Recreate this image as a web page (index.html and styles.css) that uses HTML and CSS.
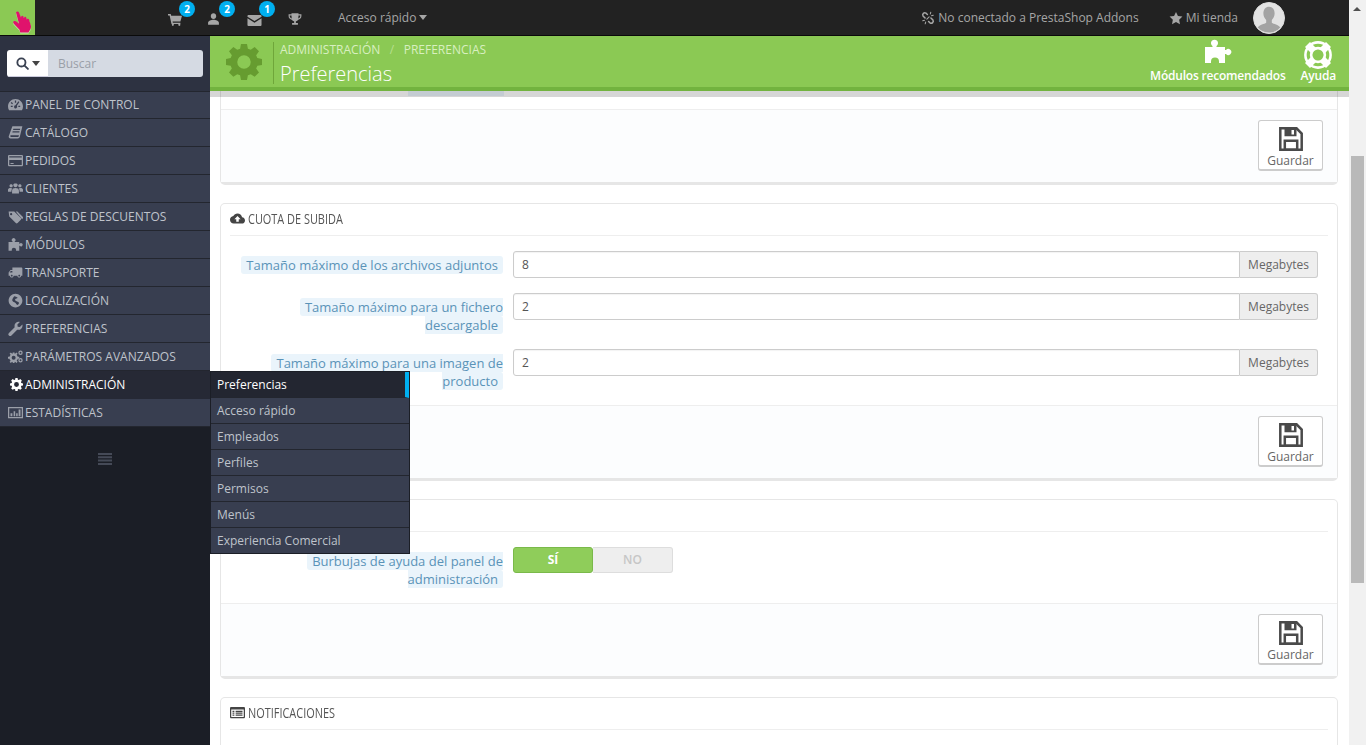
FILE: index.html
```html
<!DOCTYPE html>
<html lang="es">
<head>
<meta charset="utf-8">
<title>Preferencias</title>
<link rel="stylesheet" href="styles.css">
</head>
<body>
<svg class="sprite" width="0" height="0" aria-hidden="true">
  <symbol id="i-cart" viewBox="0 0 26 22"><path d="M0 0h5l1 3h20l-3 11H8.500l.5 2h14v2.500H6.500L3 2.500H0z"/><circle cx="9" cy="20" r="2"/><circle cx="21" cy="20" r="2"/></symbol>
  <symbol id="i-user" viewBox="0 0 24 24"><path d="M12 12c2.900 0 5-2.300 5-5.200S14.900 1.500 12 1.500 7 3.900 7 6.800 9.100 12 12 12zm0 1.500c-4 0-10 1.700-10 5.500v3.500h20V19c0-3.800-6-5.500-10-5.500z"/></symbol>
  <symbol id="i-mail" viewBox="0 3 24 18"><path d="M2 3h20c.9 0 1.500.6 1.500 1.500v1.300L12 13 .5 5.800V4.500C.5 3.600 1.100 3 2 3zM.5 8.300V19.500c0 .9.6 1.500 1.500 1.500h20c.9 0 1.500-.6 1.500-1.500V8.300L12 15.500z"/></symbol>
  <symbol id="i-trophy" viewBox="0 0 24 24"><path d="M6 2h12v2h5v3c0 3.500-2.500 6-6 6.500-.8 1.300-2 2-3.500 2.400V19H17v3H7v-3h3.500v-3.100C9 15.500 7.800 14.800 7 13.500 3.500 13 1 10.500 1 7V4h5zM3 6v1c0 2 1.200 3.600 3.500 4.200C6.200 10 6 8 6 6zm18 0h-3c0 2-.2 4-.5 5.200C19.800 10.600 21 9 21 7z"/></symbol>
  <symbol id="i-star" viewBox="0 0 24 24"><path d="M12 1.500l3.300 7 7.700 1-5.600 5.300 1.400 7.700-6.800-3.700-6.800 3.700 1.400-7.700L1 9.500l7.700-1z"/></symbol>
  <symbol id="i-unlink" viewBox="0 0 24 24"><g fill="none" stroke="currentColor" stroke-width="2.600" stroke-linecap="round"><path d="M11 6L8.500 3.800a3.500 3.500 0 0 0-5 4.700L7 12"/><path d="M13 18l2.500 2.200a3.500 3.500 0 0 0 5-4.700L17 12"/><path d="M6 16l-3 .8M8 19l-.8 3M18 8l3-.8M16 5l.8-3M10 14l4-4" stroke-width="1.800"/></g></symbol>
  <symbol id="i-gear" viewBox="0 0 24 24"><path fill-rule="evenodd" d="M10 1h4l.6 3.100 1.900.8L19.100 3 22 5.900l-1.900 2.600.8 1.900L24 11v4l-3.100.5-.8 1.900L22 20l-2.900 2.900-2.600-1.800-1.900.8L14 25h-4l-.6-3.100-1.900-.8L4.900 22.900 2 20l1.900-2.600-.8-1.900L0 15v-4l3.100-.6.8-1.900L2 5.900 4.900 3l2.600 1.900 1.900-.8zM12 8.500a4.500 4.500 0 1 0 0 9 4.500 4.500 0 0 0 0-9z" transform="translate(0 -1)"/></symbol>
  <symbol id="i-puzzle" viewBox="0 0 28 25"><path d="M1 8h7.500V7a3.500 3.500 0 1 1 4 0v1H21v3h1a3 3 0 1 1 0 4h-1v9h-6v-1.500a4 4 0 0 0-8 0V24H1z"/></symbol>
  <symbol id="i-buoy" viewBox="0 0 24 24"><circle cx="12" cy="12" r="10.800" fill="none" stroke="currentColor" stroke-width="2.200"/><circle cx="12" cy="12" r="5.800" fill="none" stroke="currentColor" stroke-width="2.400"/><path d="M12 12L3 3" stroke="currentColor" stroke-width="6"/><path d="M12 12L21 3" stroke="currentColor" stroke-width="6"/><path d="M12 12L3 21" stroke="currentColor" stroke-width="6"/><path d="M12 12L21 21" stroke="currentColor" stroke-width="6"/><circle class="buoy-hole" cx="12" cy="12" r="4.700"/></symbol>
  <symbol id="i-search" viewBox="0 0 24 24"><g fill="none" stroke="currentColor" stroke-width="3.400" stroke-linecap="round"><circle cx="10" cy="10" r="7.500"/><path d="M15.800 15.800L22 22"/></g></symbol>
  <symbol id="i-gauge" viewBox="0 0 24 24"><path fill-rule="evenodd" d="M12 3C5.400 3 0 8.400 0 15c0 2.200.6 4.300 1.700 6h20.600c1.100-1.700 1.700-3.800 1.700-6 0-6.600-5.400-12-12-12zM11 5.500h2V9h-2zM4.500 14h3v2h-3zm12 0h3v2h-3zM5.500 8l2.500 2-1.300 1.400-2.400-2zm11.200-1.200l1.500 1.300-4 6a2.500 2.500 0 1 1-2.200-1z"/></symbol>
  <symbol id="i-book" viewBox="0 0 24 24"><path d="M7 2h16l-4 16.500c-.3 1.400-1.300 3-3.500 3H4c-2 0-3.300-1.500-2.800-3.500zM8.500 6l-.4 1.800h11L19.500 6zM7.400 10l-.4 1.800h11l.4-1.800zM4.800 16.500c-.8 0-1.300.5-1.300 1.200s.5 1.300 1.300 1.300h11c.8 0 1.200-.5 1.400-1.200l.3-1.300z"/></symbol>
  <symbol id="i-card" viewBox="0 0 24 24"><path fill-rule="evenodd" d="M2 3h20c1.100 0 2 .9 2 2v14c0 1.100-.9 2-2 2H2c-1.100 0-2-.9-2-2V5c0-1.100.9-2 2-2zm0 2v2h20V5zm0 6v8h20v-8zm2 5h5v1.500H4z"/></symbol>
  <symbol id="i-group" viewBox="0 4 24 16"><path d="M12 10c2 0 3.500-1.600 3.500-3.500S14 4 12 4 8.500 4.600 8.500 6.500 10 10 12 10zM5 10c1.500 0 2.600-1.100 2.600-2.600S6.500 5 5 5 2.400 5.900 2.400 7.400 3.500 10 5 10zm14 0c1.500 0 2.600-1.100 2.600-2.600S20.500 5 19 5s-2.600.9-2.600 2.400S17.500 10 19 10zM7 12c-1-.8-2-1-3-1-2 0-4 .8-4 3v3h5.500v-1.500C5.500 14 6 13 7 12zm10 0c1 1 1.500 2 1.500 3.500V17H24v-3c0-2.200-2-3-4-3-1 0-2 .2-3 1zM6.500 20h11v-4.500c0-3-2.500-4.200-5.500-4.200s-5.500 1.200-5.500 4.200z"/></symbol>
  <symbol id="i-tag" viewBox="0 0 24 24"><path d="M1 4h9l10.500 10.500c.8.8.8 2 0 2.800l-5.200 5.200c-.8.8-2 .8-2.800 0L2 12zm4 2.500a1.800 1.800 0 1 0 0 3.600 1.800 1.800 0 0 0 0-3.600z"/><path d="M12.500 4h2.500l8.500 8.500c.8.8.8 2 0 2.800l-1 1z"/></symbol>
  <symbol id="i-truck" viewBox="0 0 24 24"><path transform="matrix(-1 0 0 1 24 0)" d="M20 8h-3V4H3c-1.100 0-2 .9-2 2v11h2c0 1.660 1.340 3 3 3s3-1.340 3-3h6c0 1.660 1.340 3 3 3s3-1.340 3-3h2v-5l-3-4zM6 18.500c-.83 0-1.500-.67-1.500-1.500s.67-1.500 1.500-1.500 1.500.67 1.500 1.500-.67 1.500-1.500 1.500zm13.500-9l1.960 2.500H17V9.500h2.500zm-1.500 9c-.83 0-1.500-.67-1.500-1.500s.67-1.500 1.500-1.500 1.500.67 1.500 1.500-.67 1.500-1.500 1.500z"/></symbol>
  <symbol id="i-globe" viewBox="0 0 24 24"><path d="M12 1C5.900 1 1 5.900 1 12s4.900 11 11 11 11-4.900 11-11S18.100 1 12 1zm-2 4c2 .5 4 1 5.500 2.500-1 1.500-3 1-4 2.500s1 3 3 3.500c1.500.3 3 .8 3 2.500 0 1-.8 2.500-2 3-2.500-.5-2.500-2.500-4-3.500s-3.500-1-4.500-3C6 10.500 8 8 10 5z"/></symbol>
  <symbol id="i-wrench" viewBox="0 0 24 24"><path d="M23 5.500c.6 2.500 0 5-1.800 6.700-1.800 1.800-4.300 2.300-6.500 1.600L5.500 23a2.800 2.800 0 0 1-4-4l9.200-9.200c-.7-2.200-.2-4.700 1.600-6.500C14 1.500 16.500.9 19 1.500L15 5.500l.5 3.500 3.500.5z"/></symbol>
  <symbol id="i-cogs" viewBox="0 0 24 24"><circle cx="9" cy="14" r="5" fill="none" stroke="currentColor" stroke-width="3.600"/><path d="M7.500 5.500h3v4h-3zM7.500 18.500h3v4h-3zM0 12.500h4v3H0zM14 12.500h4v3h-4zM2.500 7.500l2-2 3 3-2 2zM13.500 5.500l2 2-3 3-2-2zM2.500 20.500l2 2 3-3-2-2zM15.500 20.500l-2 2-3-3 2-2z"/><circle cx="20" cy="6" r="2.500" fill="none" stroke="currentColor" stroke-width="2"/><circle cx="20" cy="18" r="2.500" fill="none" stroke="currentColor" stroke-width="2"/></symbol>
  <symbol id="i-chart" viewBox="0 0 24 24"><path fill-rule="evenodd" d="M0 3h24v18H0zm2 2v14h20V5z"/><path d="M4 13h3v5H4zM9 10h2.500v8H9zM13 13h2.500v5H13zM17 7h3v11h-3z"/></symbol>
  <symbol id="i-bars" viewBox="0 0 14 12"><path d="M0 0h14v2H0zM0 3.300h14v2H0zM0 6.600h14v2H0zM0 10h14v2H0z"/></symbol>
  <symbol id="i-cloud" viewBox="0 0 24 24"><path d="M19.350 10.040C18.670 6.590 15.640 4 12 4 9.110 4 6.600 5.640 5.350 8.040 2.340 8.360 0 10.910 0 14c0 3.310 2.690 6 6 6h13c2.760 0 5-2.240 5-5 0-2.640-2.050-4.780-4.650-4.960zM14 13v4h-4v-4H7l5-5 5 5h-3z"/></symbol>
  <symbol id="i-list" viewBox="0 0 24 24"><path fill-rule="evenodd" d="M2 3h20c1.100 0 2 .9 2 2v14c0 1.100-.9 2-2 2H2c-1.100 0-2-.9-2-2V5c0-1.100.9-2 2-2zm0 4v12h20V7zm2 2h3v2H4zm5 0h11v2H9zM4 12h3v2H4zm5 0h11v2H9zM4 15h3v2H4zm5 0h11v2H9z"/></symbol>
  <symbol id="i-save" viewBox="0 0 24 24"><path d="M1.300 1.300H17.500l5.200 5.200v16.200H1.300z" fill="none" stroke="currentColor" stroke-width="2.500"/><path fill-rule="evenodd" d="M5.500 1.300h12v8h-12zM12.500 3v4.500h2.500V3z"/><path d="M5.800 13.800h12.400v8.900H5.800z" fill="none" stroke="currentColor" stroke-width="2.500"/></symbol>
  <symbol id="i-hand" viewBox="0 0 19 22"><path d="M3 1.500C3.600.3 5.300.1 5.900 1.300L8 6.500l.4-1.200c.3-.9 1.800-.8 2 .3l.5 1.700.5-1c.4-.8 1.700-.6 1.900.4l.5 1.800.5-.6c.5-.5 1.400-.2 1.700.6L18 15c.2 1.800-.5 3.600-1.800 5l-.6 1.500H7.200L6.500 18.800 .8 12.700c-.8-.9-.8-2 0-2.500.8-.5 1.800-.2 2.500.4L6 12.800z"/></symbol>
</svg>

<div class="app">
  <div class="page">
    <header class="topbar">
      <a class="logo"><svg class="hand"><use href="#i-hand"/></svg></a>
      <nav class="notifs">
        <span class="notif n-cart"><svg class="ico"><use href="#i-cart"/></svg><b class="badge">2</b></span>
        <span class="notif n-user"><svg class="ico"><use href="#i-user"/></svg><b class="badge">2</b></span>
        <span class="notif n-mail"><svg class="ico"><use href="#i-mail"/></svg><b class="badge">1</b></span>
        <span class="notif n-trophy"><svg class="ico"><use href="#i-trophy"/></svg></span>
      </nav>
      <span class="quick">Acceso rápido<i class="caret"></i></span>
      <div class="top-right">
        <span class="top-link addons"><svg class="ico"><use href="#i-unlink"/></svg>No conectado a PrestaShop Addons</span>
        <span class="top-link shop"><svg class="ico"><use href="#i-star"/></svg>Mi tienda</span>
        <span class="avatar"><svg viewBox="0 0 32 32"><path d="M16 4c3.500 0 6 2.800 6 7 0 3-1.200 5.500-3 7v3c2 1.500 7 2 9 5a16 16 0 0 1-24 0c2-3 7-3.500 9-5v-3c-1.800-1.500-3-4-3-7 0-4.200 2.500-7 6-7z"/></svg></span>
      </div>
    </header>

    <div class="workspace">
      <aside class="sidebar">
        <div class="search">
          <div class="search-group">
            <span class="search-btn"><svg class="search-ico"><use href="#i-search"/></svg><i class="caret dark"></i></span>
            <span class="search-input">Buscar</span>
          </div>
        </div>
        <ul class="menu">
          <li class="menu-item"><svg class="m-ico"><use href="#i-gauge"/></svg>PANEL DE CONTROL</li>
          <li class="menu-item"><svg class="m-ico"><use href="#i-book"/></svg>CATÁLOGO</li>
          <li class="menu-item"><svg class="m-ico"><use href="#i-card"/></svg>PEDIDOS</li>
          <li class="menu-item"><svg class="m-ico"><use href="#i-group"/></svg>CLIENTES</li>
          <li class="menu-item"><svg class="m-ico"><use href="#i-tag"/></svg>REGLAS DE DESCUENTOS</li>
          <li class="menu-item"><svg class="m-ico"><use href="#i-puzzle"/></svg>MÓDULOS</li>
          <li class="menu-item"><svg class="m-ico"><use href="#i-truck"/></svg>TRANSPORTE</li>
          <li class="menu-item"><svg class="m-ico"><use href="#i-globe"/></svg>LOCALIZACIÓN</li>
          <li class="menu-item"><svg class="m-ico"><use href="#i-wrench"/></svg>PREFERENCIAS</li>
          <li class="menu-item"><svg class="m-ico"><use href="#i-cogs"/></svg>PARÁMETROS AVANZADOS</li>
          <li class="menu-item active"><svg class="m-ico"><use href="#i-gear"/></svg>ADMINISTRACIÓN
            <ul class="flyout">
              <li class="fly-item current">Preferencias</li>
              <li class="fly-item">Acceso rápido</li>
              <li class="fly-item">Empleados</li>
              <li class="fly-item">Perfiles</li>
              <li class="fly-item">Permisos</li>
              <li class="fly-item">Menús</li>
              <li class="fly-item">Experiencia Comercial</li>
            </ul>
          </li>
          <li class="menu-item"><svg class="m-ico"><use href="#i-chart"/></svg>ESTADÍSTICAS</li>
        </ul>
        <div class="collapse"><svg class="bars"><use href="#i-bars"/></svg></div>
      </aside>

      <main class="main">
        <div class="page-head">
          <svg class="head-gear"><use href="#i-gear"/></svg>
          <div class="head-titles">
            <div class="crumbs"><span>ADMINISTRACIÓN</span><span class="sep">/</span><span>PREFERENCIAS</span></div>
            <h1>Preferencias</h1>
          </div>
          <div class="head-actions">
            <a class="head-action"><svg class="act-puzzle"><use href="#i-puzzle"/></svg>Módulos recomendados</a>
            <a class="head-action"><svg class="act-buoy"><use href="#i-buoy"/></svg>Ayuda</a>
          </div>
        </div>

        <div class="content">
          <section class="panel first">
            <div class="panel-stub"><span class="stub-hint"></span></div>
            <div class="panel-footer"><button class="save"><svg class="save-ico"><use href="#i-save"/></svg>Guardar</button></div>
          </section>

          <section class="panel">
            <h2 class="panel-head"><svg class="h-ico"><use href="#i-cloud"/></svg><span class="head-text">CUOTA DE SUBIDA</span></h2>
            <div class="panel-body">
              <div class="field">
                <label class="field-label"><span class="hint">Tamaño máximo de los archivos adjuntos</span></label>
                <div class="input-group"><span class="input">8</span><span class="addon">Megabytes</span></div>
              </div>
              <div class="field">
                <label class="field-label"><span class="hint">Tamaño máximo para un fichero descargable</span></label>
                <div class="input-group"><span class="input">2</span><span class="addon">Megabytes</span></div>
              </div>
              <div class="field">
                <label class="field-label"><span class="hint">Tamaño máximo para una imagen de producto</span></label>
                <div class="input-group"><span class="input">2</span><span class="addon">Megabytes</span></div>
              </div>
            </div>
            <div class="panel-footer"><button class="save"><svg class="save-ico"><use href="#i-save"/></svg>Guardar</button></div>
          </section>

          <section class="panel">
            <h2 class="panel-head">&nbsp;</h2>
            <div class="panel-body">
              <div class="field">
                <label class="field-label"><span class="hint">Burbujas de ayuda del panel de administración</span></label>
                <div class="switch"><span class="sw-yes">SÍ</span><span class="sw-no">NO</span></div>
              </div>
            </div>
            <div class="panel-footer"><button class="save"><svg class="save-ico"><use href="#i-save"/></svg>Guardar</button></div>
          </section>

          <section class="panel tall">
            <h2 class="panel-head"><svg class="h-ico"><use href="#i-list"/></svg><span class="head-text">NOTIFICACIONES</span></h2>
          </section>
        </div>
      </main>
    </div>
  </div>

  <div class="scrollbar"><i class="sb-up"></i><i class="sb-thumb"></i></div>
</div>
</body>
</html>
```

FILE: styles.css
```css
* { box-sizing: border-box; }
html, body { margin: 0; height: 100%; overflow: hidden; }
body { font-family: "Open Sans", "Liberation Sans", sans-serif; font-size: 12px; color: #555; background: #fff; }
ul { list-style: none; margin: 0; padding: 0; }
.sprite { position: absolute; }
svg { fill: currentColor; display: block; }

.app { display: flex; height: 745px; }
.page { width: 1349px; display: flex; flex-direction: column; }

/* top bar */
.topbar { height: 36px; flex: none; display: flex; align-items: center; background: #222; border-bottom: 1px solid #0a0a0a; color: #a6a6a6; }
.logo { width: 35px; height: 35px; background: #8bc954; padding: 11px 0 0 13px; }
.hand { width: 19px; height: 22px; color: #e0136c; filter: drop-shadow(0 1px 0 rgba(255, 255, 255, .55)); }
.notifs { display: flex; margin-left: 133px; align-items: center; }
.notif { position: relative; display: block; }
.notif .ico { width: 100%; height: 100%; }
.n-cart { width: 14px; height: 12px; margin-top: 4px; }
.n-user { width: 13px; height: 14px; margin: 2px 0 0 25px; }
.n-mail { width: 15px; height: 11px; margin: 5px 0 0 27px; }
.n-trophy { width: 14px; height: 14px; margin: 2px 0 0 26px; }
.badge { position: absolute; top: -13px; left: 11px; width: 16px; height: 16px; border-radius: 50%; background: #00aff0; color: #fff; font-size: 10px; font-weight: 700; line-height: 16px; text-align: center; }
.n-user .badge { left: 12px; top: -11px; }
.n-mail .badge { left: 12px; top: -14px; }
.quick { margin-left: 36px; display: flex; align-items: center; }
.caret { display: block; width: 0; height: 0; border: 4.5px solid transparent; border-top: 5px solid currentColor; border-bottom: 0; margin-left: 3px; }
.caret.dark { color: #444; }
.top-right { margin-left: auto; display: flex; align-items: center; padding-right: 64px; }
.top-link { display: flex; align-items: center; }
.top-link .ico { width: 14px; height: 14px; margin-right: 3px; }
.shop { margin-left: 30px; }
.avatar { width: 32px; height: 32px; margin-left: 15px; border-radius: 50%; background: #e3e3e3; overflow: hidden; color: #a3a3a3; border: 1px solid #ddd; }
.avatar svg { width: 30px; height: 30px; }

.workspace { flex: 1; display: flex; min-height: 0; }

/* sidebar */
.sidebar { width: 210px; flex: none; background: #1b1e26; color: #bfc3cb; }
.search { height: 55px; background: #2d3241; padding: 14px 7px; }
.search-group { height: 27px; display: flex; border-radius: 3px; overflow: hidden; }
.search-btn { width: 41px; background: #fff; display: flex; align-items: center; justify-content: center; border-bottom: 1px solid #ccd; }
.search-ico { width: 13px; height: 13px; color: #3a4252; }
.search-input { flex: 1; background: #d5dae3; color: #9a9fa8; line-height: 27px; padding-left: 10px; }
.menu-item { position: relative; height: 28px; line-height: 27px; padding-left: 25px; background: #383e50; border-bottom: 1px solid #23262f; white-space: nowrap; }
.menu-item:first-child { border-top: 1px solid #23262f; line-height: 25px; }
.m-ico { position: absolute; left: 8px; top: 6px; width: 15px; height: 15px; color: #9b9fa9; }
.menu-item:first-child .m-ico { top: 5px; }
.menu-item.active { background: #262935; color: #fff; border-bottom-color: #262935; }
.menu-item.active .m-ico { color: #fff; left: 10px; width: 13px; }
.flyout { position: absolute; left: 210px; top: 0; width: 200px; background: #383e50; border: 1px solid #1b1e26; z-index: 20; }
.fly-item { height: 26px; line-height: 25px; padding-left: 6px; color: #bfc3cb; border-bottom: 1px solid #23262f; }
.fly-item:last-child { height: 25px; border-bottom: 0; }
.fly-item.current { background: #232631; color: #fff; border-right: 4px solid #00aff0; }
.collapse { padding: 26px 0 0 98px; color: #454a57; }
.bars { width: 14px; height: 12px; }

/* main */
.main { flex: 1; min-width: 0; display: flex; flex-direction: column; }
.page-head { position: relative; z-index: 5; height: 55px; flex: none; display: flex; background: #8bc954; border-bottom: 4px solid #72b33f; color: #fff; }
.page-head::after { content: ""; position: absolute; left: 0; right: 0; top: 55px; height: 6px; background: rgba(0, 0, 0, .16); }
.head-gear { width: 36px; height: 36px; margin: 8px 0 0 16px; color: #669c30; }
.head-titles { margin: 6px 0 0 11px; height: 42px; border-left: 1px solid #6fa63a; padding-left: 6px; }
.crumbs { display: flex; color: #d8efc0; line-height: 14px; margin-top: 1px; }
.sep { margin: 0 9.5px; color: #b7df8f; }
h1 { margin: 3px 0 0; font-size: 20px; font-weight: 300; line-height: 27px; color: #fff; }
.head-actions { margin-left: auto; display: flex; padding-right: 13px; gap: 15px; }
.head-action { display: flex; flex-direction: column; align-items: center; justify-content: flex-end; font-weight: 600; letter-spacing: -.2px; line-height: 14px; padding-bottom: 4px; }
.act-puzzle { width: 28px; height: 25px; margin-bottom: 5px; }
.act-buoy { width: 28px; height: 28px; margin-bottom: 0; }
.buoy-hole { fill: #8bc954; }

.content { flex: 1; min-height: 0; overflow: hidden; padding: 0 11px 0 10px; }
.panel { background: #fff; border: 1px solid #e6e6e6; border-bottom: 3px solid #e6e6e6; border-radius: 5px; margin-bottom: 18px; }
.panel.first { border-top: 0; border-radius: 0 0 5px 5px; }
.panel.tall { min-height: 120px; }
.panel-stub { height: 18px; padding-left: 187px; overflow: hidden; }
.stub-hint { display: block; width: 96px; height: 5px; background: #eaf4fb; }
.panel-head { margin: 0 9px; height: 32px; padding-bottom: 2px; display: flex; align-items: center; border-bottom: 1px solid #eee; font-size: 14px; font-weight: 400; color: #555; }
.head-text { display: block; transform: scaleX(.78); transform-origin: left center; white-space: nowrap; }
.h-ico { width: 15px; height: 15px; margin-right: 3px; color: #444; }
.panel-body { padding: 15px 19px 0 0; }
.panel-footer { display: flex; justify-content: flex-end; padding: 10px 14px 11px 0; background: #fcfdfe; border-top: 1px solid #eee; }
.save { width: 65px; height: 51px; padding: 6px 0 0; display: flex; flex-direction: column; align-items: center; background: #fff; border: 1px solid #ccc; border-bottom-width: 2px; border-radius: 3px; font: 12px/14px "Open Sans", sans-serif; color: #666; }
.save-ico { flex: none; width: 24px; height: 24px; margin-bottom: 3px; color: #4a4a4a; }

.field { display: flex; margin-bottom: 15px; }
.field-label { width: 282px; flex: none; padding: 5px 0 0 20px; text-align: right; font-size: 13px; line-height: 18px; }
.hint { padding: 0 5px; background: #eaf4fb; color: #5a93b8; border-radius: 3px; }
.input-group { flex: 1; margin-left: 10px; display: flex; height: 27px; }
.input { flex: 1; border: 1px solid #ccc; border-radius: 3px 0 0 3px; line-height: 25px; padding-left: 8px; color: #555; box-shadow: inset 0 1px 1px rgba(0, 0, 0, .05); }
.addon { width: 78px; border: 1px solid #ccc; border-left: 0; border-radius: 0 3px 3px 0; background: #eee; color: #666; line-height: 25px; text-align: center; }
.switch { margin-left: 10px; width: 160px; height: 26px; display: flex; font-weight: 700; line-height: 24px; text-align: center; border-radius: 3px; }
.sw-yes { width: 80px; background: #8fcd5a; border: 1px solid #7ab94a; border-radius: 3px; color: #fff; }
.sw-no { width: 80px; background: #eee; border: 1px solid #ddd; border-left: 0; border-radius: 0 3px 3px 0; color: #c6c6c6; font-weight: 600; }

/* scrollbar */
.scrollbar { position: relative; width: 17px; background: #f1f1f1; }
.sb-up { position: absolute; left: 4px; top: 7px; width: 0; height: 0; border: 4px solid transparent; border-bottom: 4px solid #505050; border-top: 0; }
.sb-thumb { position: absolute; left: 2px; top: 156px; width: 13px; height: 427px; background: #b9b9b9; }
```
